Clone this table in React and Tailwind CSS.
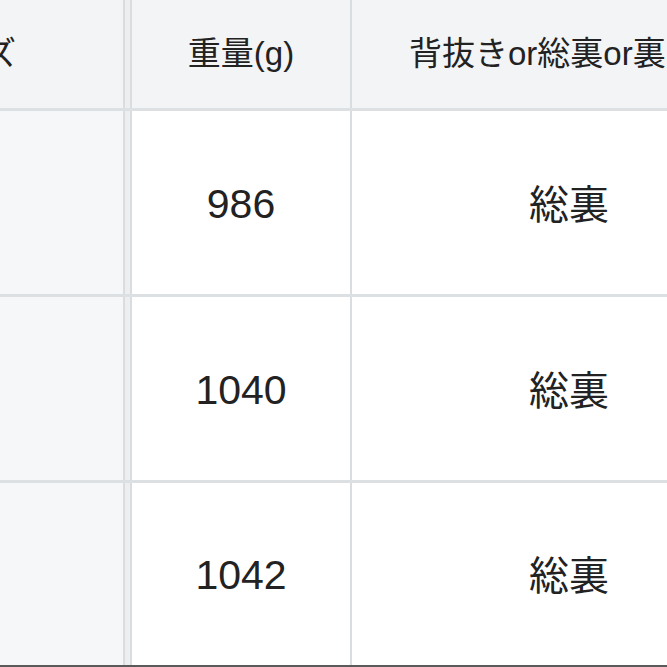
import React from "react";

const rows = [
  { weight: "986", lining: "総裏" },
  { weight: "1040", lining: "総裏" },
  { weight: "1042", lining: "総裏" },
];

export default function App() {
  return (
    <div
      className="w-[667px] h-[667px] overflow-hidden bg-white text-[#222]"
      style={{ fontFamily: '"Liberation Sans", "Noto Sans CJK JP", sans-serif' }}
    >
      <div className="flex flex-col w-[786px]">
        {/* header */}
        <div className="flex h-[111px] bg-[#f3f4f5] border-b-[3px] border-[#dde0e3]">
          <div className="w-[125px] shrink-0 flex items-center justify-end pr-[107px] border-r-2 border-[#dadde0] overflow-hidden">
            <span className="shrink-0 whitespace-nowrap text-[33px]">サイズ</span>
          </div>
          <div className="w-[5px] shrink-0 bg-[#eceef0]" />
          <div className="w-[222px] shrink-0 flex items-center justify-center border-l-2 border-r-2 border-[#dadde0]">
            <span className="text-[33px] whitespace-nowrap">重量(g)</span>
          </div>
          <div className="flex-1 flex items-center pl-[57px] overflow-hidden">
            <span className="text-[33px] whitespace-nowrap">背抜きor総裏or裏</span>
          </div>
        </div>
        {rows.map((r, i) => (
          <div
            key={i}
            className={
              i < rows.length - 1
                ? "flex h-[186px] border-b-[3px] border-[#dde0e3]"
                : "flex h-[182px]"
            }
          >
            <div className="w-[125px] shrink-0 bg-[#f6f7f8] border-r-2 border-[#dadde0]" />
            <div className="w-[5px] shrink-0 bg-[#eceef0]" />
            <div className="w-[222px] shrink-0 flex items-center justify-center border-l-2 border-r-2 border-[#dadde0]">
              <span className="text-[41px] pt-[4px]">{r.weight}</span>
            </div>
            <div className="flex-1 flex items-center justify-center">
              <span className="text-[40px] pt-[4px]">{r.lining}</span>
            </div>
          </div>
        ))}
        <div className="h-[2px] bg-[#5a5a5a]" />
      </div>
    </div>
  );
}
